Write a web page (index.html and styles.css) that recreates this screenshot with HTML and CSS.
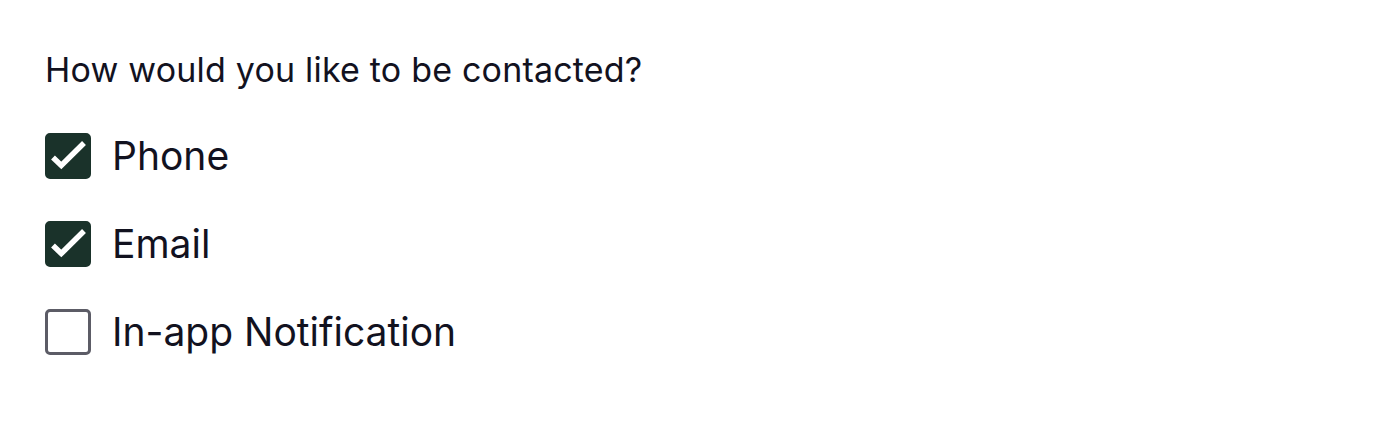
FILE: index.html
```html
<!DOCTYPE html>
<html lang="en">

<head>
    <meta charset="UTF-8" />
    <meta name="viewport" content="width=device-width, initial-scale=1.0" />
    <title>Contact preferences</title>
    <link rel="stylesheet" href="styles.css">
</head>

<body>
    <div class="contact-group" role="group" aria-labelledby="contactTitle">
        <div class="contact-title" id="contactTitle">How would you like to be contacted?</div>
        <label class="option">
            <input type="checkbox" class="option-input" checked>
            <span class="box">
                <svg class="tick" viewBox="0 0 46 46"><path d="M8 24.5 L16.3 32.5 L39 10" /></svg>
            </span>
            <span class="option-text">Phone</span>
        </label>
        <label class="option">
            <input type="checkbox" class="option-input" checked>
            <span class="box">
                <svg class="tick" viewBox="0 0 46 46"><path d="M8 24.5 L16.3 32.5 L39 10" /></svg>
            </span>
            <span class="option-text">Email</span>
        </label>
        <label class="option">
            <input type="checkbox" class="option-input">
            <span class="box">
                <svg class="tick" viewBox="0 0 46 46"><path d="M8 24.5 L16.3 32.5 L39 10" /></svg>
            </span>
            <span class="option-text">In-app Notification</span>
        </label>
    </div>
</body>

</html>
```

FILE: styles.css
```css
* {
    box-sizing: border-box;
    margin: 0;
    padding: 0;
}

body {
    font-family: Inter, 'Noto Sans', sans-serif;
    background: #fff;
    color: #12121f;
    padding: 50px 45px;
}

.contact-group {
    display: flex;
    flex-direction: column;
    gap: 42px;
}

.contact-title {
    font-size: 34px;
    line-height: 40px;
    letter-spacing: 0.2px;
    margin-bottom: 1px;
}

.option {
    display: flex;
    align-items: center;
    gap: 21px;
    font-size: 39px;
    line-height: 46px;
    cursor: pointer;
}

.option-input {
    display: none;
}

.box {
    width: 46px;
    height: 46px;
    flex-shrink: 0;
    border: 3px solid #5c5c66;
    border-radius: 5px;
    position: relative;
}

.tick {
    display: none;
    position: absolute;
    inset: -3px;
    width: 46px;
    height: 46px;
    fill: none;
    stroke: #fff;
    stroke-width: 5.5;
}

.option-input:checked + .box {
    background: #1a322a;
    border-color: #1a322a;
}

.option-input:checked + .box .tick {
    display: block;
}
```
